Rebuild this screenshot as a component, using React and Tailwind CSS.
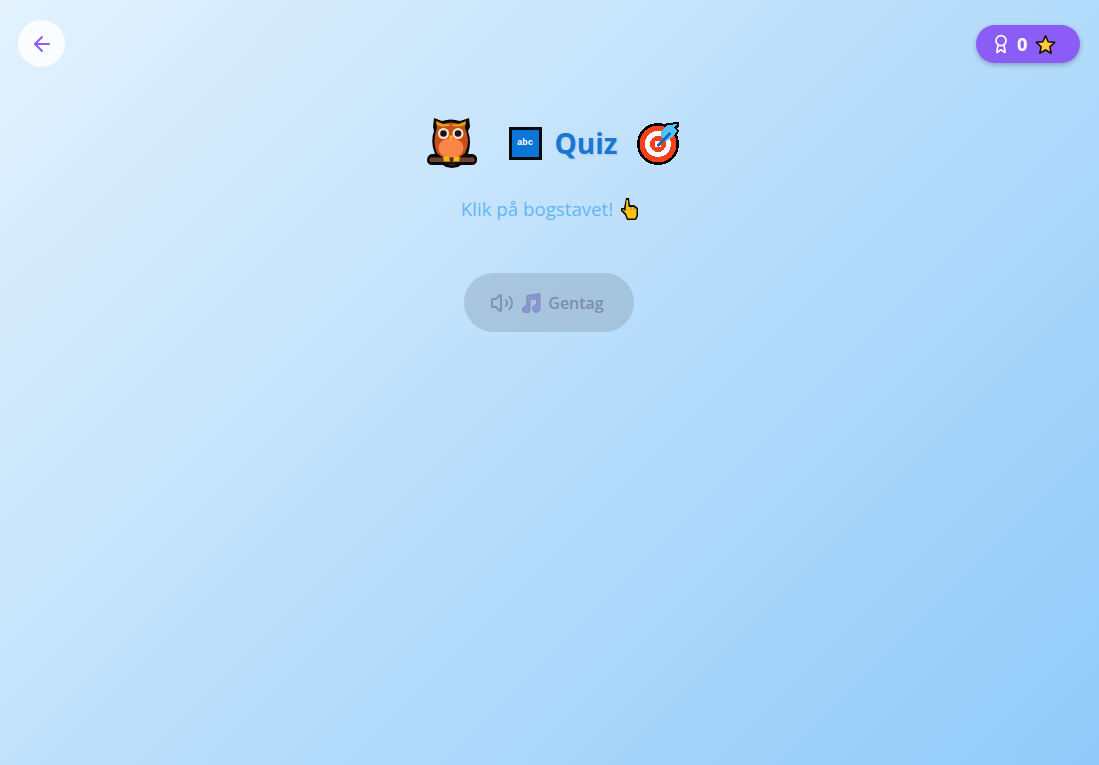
import React from "react";
import { ArrowLeft, Award, Volume2 } from "lucide-react";

function Owl() {
  return (
    <svg width="50" height="50" viewBox="0 0 50 50" className="shrink-0">
      <path d="M7 0 L15 3 Q24 0 33 3 L42 0 L43 9 L41 13 Q45 24 41 36 L46 36 Q51 38 50 42 Q50 46 46 47 L34 47 L31 49 L25 50 L19 49 L16 47 L4 47 Q0 46 0 42 Q0 38 4 36 L8 36 Q3 24 7 13 L6 9 Z" fill="#0d0805" />
      <path d="M3 39.500 L47 39.500 Q48 41.500 47 44 L3 44 Q2 41.500 3 39.500 Z" fill="#6b4436" />
      <path d="M9 4 L16 6 Q24 3 32 6 L39 4 L38 10 Q44 23 38 35 Q32 41 24 41 Q16 41 10 35 Q5 23 10 10 Z" fill="#c4501b" />
      <path d="M9 3 L16 6 L23 6.500 L23 8 L15 8.500 L10 7 Z" fill="#e8a113" />
      <path d="M39 3 L32 6 L25 6.500 L25 8 L33 8.500 L38 7 Z" fill="#e8a113" />
      <ellipse cx="24" cy="30" rx="12.500" ry="10" fill="#f98546" />
      <circle cx="16.500" cy="15.500" r="5.500" fill="#fbe3d2" />
      <circle cx="31" cy="15.500" r="5.500" fill="#fbe3d2" />
      <circle cx="16.500" cy="15.500" r="3.300" fill="#1c1412" />
      <circle cx="31" cy="15.500" r="3.300" fill="#1c1412" />
      <path d="M21.500 17.500 L26.500 17.500 L24 24 Z" fill="#f7a81d" />
      <rect x="21" y="39.500" width="7" height="5" fill="#4a3028" />
      <path d="M16 38.500 L22 38.500 L23 43.500 L17 43.500 Z" fill="#f9b70f" />
      <path d="M27 38.500 L33 38.500 L32 43.500 L26 43.500 Z" fill="#f9b70f" />
      <path d="M20 46 L30 46 L25 48 Z" fill="#3a2620" />
    </svg>
  );
}

function Abc() {
  return (
    <div className="w-[33px] h-[33px] shrink-0 border-[3px] border-[#0a0a0a] bg-[#0b76d8] flex items-center justify-center text-white text-[9px] font-bold leading-none font-['Liberation_Mono',monospace]">
      abc
    </div>
  );
}

function Target() {
  return (
    <svg width="43" height="43" viewBox="0 0 43 43" className="shrink-0" shapeRendering="crispEdges">
      <circle cx="21" cy="22" r="21" fill="#000" />
      <path d="M25 5 L30 1 L42 0 L42 4 L40 6 L42 9 L38 17 L30 20 Z" fill="#000" />
      <circle cx="21" cy="22" r="18.500" fill="#f4411c" />
      <circle cx="21" cy="22" r="13" fill="#fff" />
      <circle cx="21" cy="22" r="8" fill="#f4411c" />
      <circle cx="21" cy="22" r="3.500" fill="#fff" />
      <path d="M24 9 L31 3 L40 2 L37 6 L40 9 L36 15 L29 19 Q23 17 24 9 Z" fill="#4fc3f7" />
      <path d="M19 23 L32 10 L34 12 L21 25 Z" fill="#1469c4" />
    </svg>
  );
}

function Hand() {
  return (
    <svg width="17" height="22" viewBox="0 0 17 22" className="shrink-0">
      <path d="M5 0 L8 0 L9 7 L13 7 L17 10 L17 18 L15 22 L6 22 L4 17 L0 13 L0 10 L3 10 Z" fill="#0d0a05" />
      <path d="M5.500 2 L7 2 L7.500 9 L12.500 9 L15.500 11 L15.500 17.500 L14 20.500 L7 20.500 L5 15.500 L1.500 12 L1.500 11 L4.500 13 Z" fill="#fcc21b" />
      <path d="M10 9 L10 12 M13 9.500 L13 12" stroke="#b97f10" strokeWidth="1" />
    </svg>
  );
}

function Star() {
  return (
    <svg width="21" height="21" viewBox="0 0 24 24" className="shrink-0">
      <path d="M12 2 L15 8.800 L22.500 9.600 L17 14.700 L18.500 22 L12 18.300 L5.500 22 L7 14.700 L1.500 9.600 L9 8.800 Z" fill="#ffc83d" stroke="#141008" strokeWidth="1.800" strokeLinejoin="round" />
    </svg>
  );
}

function Notes() {
  return (
    <svg width="20" height="20" viewBox="0 0 20 20" className="shrink-0">
      <path d="M6 2.500 L19 0.500 L19 15.500 A3.800 3.800 0 1 1 15.500 11.800 L15.500 6 L9 7 L9 16.500 A3.800 3.800 0 1 1 5.500 12.800 Z" fill="#8b95cf" stroke="#7a86bd" strokeWidth="0.800" />
    </svg>
  );
}

export default function App() {
  return (
    <div className="min-h-[765px] bg-[linear-gradient(135deg,#e3f2fd_0%,#90caf9_100%)] font-['Open_Sans','Noto_Sans',sans-serif] overflow-hidden">
      <header className="flex justify-between items-start pl-[18px] pr-[19px] pt-5">
        <button className="w-[47px] h-[47px] rounded-full bg-white/85 flex items-center justify-center">
          <ArrowLeft size={24} strokeWidth={2} className="text-[#8b5cf6]" />
        </button>
        <div className="mt-[5px] w-[104px] h-[38px] rounded-full bg-[#8b5cf6] flex items-center pl-[15px] gap-[6px] text-white font-bold text-lg shadow-[0_2px_5px_rgba(0,0,0,0.25)]">
          <Award size={20} strokeWidth={2} />
          <span className="w-[10px] text-center leading-none">0</span>
          <span className="ml-[2px]"><Star /></span>
        </div>
      </header>
      <main className="flex flex-col items-center">
        <h1 className="mt-[51px] flex items-center w-full justify-center pl-[8px] h-[50px]">
          <Owl />
          <span className="w-[32px]" />
          <Abc />
          <span className="ml-[13px] text-[28px] font-bold text-[#1976d2] leading-none [text-shadow:1px_1px_2px_rgba(0,0,0,0.1)]">Quiz</span>
          <span className="w-[20px]" />
          <Target />
        </h1>
        <p className="mt-[27px] flex items-center gap-[8px] text-[18.700px] text-[#64b5f6] leading-[28px]">
          Klik på bogstavet! <Hand />
        </p>
        <button className="mt-[50px] -ml-px w-[170px] h-[59px] pr-[4px] rounded-full bg-[#8fa9bf]/50 flex items-center justify-center text-[#7b8ea8] font-semibold text-base">
          <Volume2 size={24} strokeWidth={2} className="text-[#7f94ad]" />
          <span className="w-[7px]" />
          <Notes />
          <span className="w-[7px]" />
          <span>Gentag</span>
        </button>
      </main>
    </div>
  );
}
